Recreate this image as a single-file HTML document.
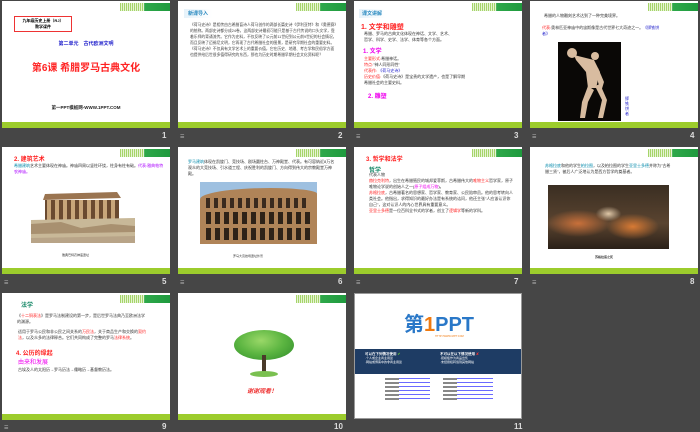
<!DOCTYPE html>
<html><head><meta charset="utf-8"><style>
*{margin:0;padding:0;box-sizing:border-box}
body{width:700px;height:432px;background:#464646;position:relative;overflow:hidden;font-family:"Liberation Sans","Noto Sans CJK SC",sans-serif}
.s{position:absolute;width:168px;height:127px;background:#fff;overflow:hidden}
.s .bar{position:absolute;left:0;right:0;bottom:0;height:6px;background:#9ccc2c}
.s .dec{position:absolute;top:2px;left:118px;width:50px;height:8px;background:linear-gradient(90deg,#c8e6a0 0,#c8e6a0 45%,#2ea84a 50%,#1f9a3e 100%)}
.s .dec:before{content:"";position:absolute;left:0;top:0;width:24px;height:8px;background:repeating-linear-gradient(90deg,#a6d46a 0 1px,#e6f4d4 1px 2px)}
.n{position:absolute;color:#ddd;font-size:8px;font-weight:bold}
.ic{position:absolute;color:#bbb;font-size:5px}
.t{position:absolute;font-size:4px;line-height:6px;color:#333}
.h{position:absolute;font-weight:bold;font-size:7px}
</style></head><body>

<!-- 1 -->
<div class="s" style="left:2px;top:1px">
<div class="dec"></div>
<div style="position:absolute;left:12px;top:15px;width:58px;height:16px;border:1px solid #e33;font-size:4px;font-weight:bold;text-align:center;line-height:6px;padding-top:1px">九年级历史上册（RJ）<br>教学课件</div>
<div style="position:absolute;left:0;width:168px;top:39px;text-align:center;color:#22c;font-size:5px;font-weight:bold">第二单元　古代欧洲文明</div>
<div style="position:absolute;left:0;width:168px;top:58px;text-align:center;color:#f22;font-size:10px;font-weight:bold">第6课 希腊罗马古典文化</div>
<div style="position:absolute;left:0;width:168px;top:104px;text-align:center;color:#222;font-size:4.5px;font-weight:bold">第一PPT模板网-WWW.1PPT.COM</div>
<div class="bar"></div></div>
<div class="n" style="left:162px;top:131px">1</div>

<!-- 2 -->
<div class="s" style="left:178px;top:1px">
<div class="dec"></div>
<div class="h" style="left:6px;top:8px;color:#2a8ac0;font-size:5px;background:linear-gradient(90deg,#e6f2fa,#fff);padding:1px 4px">新课导入</div>
<div class="t" style="left:12px;top:22px;width:148px;font-size:3.8px;line-height:5.9px;color:#444">《荷马史诗》是相传由古希腊盲诗人荷马创作的两部长篇史诗《伊利亚特》和《奥德赛》的统称。两部史诗都分成24卷，这两部史诗最初可能只是基于古代传说的口头文学，靠着乐师的背诵流传。它作为史料，不仅反映了公元前11世纪到公元前9世纪的社会情况，而且反映了迈锡尼文明，它再现了古代希腊社会的图景，是研究早期社会的重要史料。《荷马史诗》不仅具有文学艺术上的重要价值，它在历史、地理、考古学和民俗学方面也提供给后世很多值得研究的东西，那也为历史时期希腊早期社会文化资料呢？</div>
<div class="bar"></div></div>
<div class="ic" style="left:180px;top:134px">☰</div>
<div class="n" style="left:338px;top:131px">2</div>

<!-- 3 -->
<div class="s" style="left:354px;top:1px">
<div class="dec"></div>
<div class="h" style="left:5px;top:8px;color:#2a8ac0;font-size:5px;background:linear-gradient(90deg,#e6f2fa,#fff);padding:1px 3px">课文讲解</div>
<div class="h" style="left:7px;top:21px;color:#f22">1. 文学和雕塑</div>
<div class="t" style="left:10px;top:30px;width:150px">希腊、罗马的古典文化体现在神话、文学、艺术、<br>哲学、科学、史学、法学、体育等各个方面。</div>
<div class="h" style="left:9px;top:45px;color:#e0e;font-size:6px">1. 文学</div>
<div class="t" style="left:10px;top:55px;width:150px"><span style="color:#f22">主要形式:</span>希腊神话。<br><span style="color:#f22">特点:</span>"神人同形同性"<br><span style="color:#f22">代表作:</span> <span style="color:#22c">《荷马史诗》</span><br><span style="color:#f22">历史价值:</span>《荷马史诗》是宝贵的文学遗产，也是了解早期<br>希腊社会的主要史料。</div>
<div class="h" style="left:14px;top:90px;color:#e0e;font-size:6px">2. 雕塑</div>
<div class="bar"></div></div>
<div class="ic" style="left:356px;top:134px">☰</div>
<div class="n" style="left:514px;top:131px">3</div>

<!-- 4 -->
<div class="s" style="left:530px;top:1px">
<div class="dec"></div>
<div class="t" style="left:14px;top:12px;width:150px">希腊的人物雕刻艺术达到了一种完美境界。</div>
<div class="t" style="left:12px;top:24px;width:120px"><span style="color:#f22">代表:</span>奥林匹亚神庙中的宙斯像是古代世界七大奇迹之一。<span style="color:#22c">《掷铁饼者》</span></div>
<div style="position:absolute;left:28px;top:41px;width:63px;height:79px;background:#0a0806">
<svg width="63" height="79" viewBox="0 0 63 79" style="position:absolute;left:0;top:0">
<g fill="#d8bca0">
<circle cx="14" cy="11" r="5"/>
<ellipse cx="37" cy="14" rx="4" ry="4"/>
<path d="M16 13 L36 18 L42 30 L38 46 L30 46 L28 30 L18 18Z"/>
<path d="M30 44 L24 60 L22 76 L27 76 L30 60 L36 48Z"/>
<path d="M37 44 L44 58 L40 76 L45 76 L49 58 L42 42Z"/>
<path d="M40 26 L46 40 L43 50 L40 40Z"/>
</g></svg></div>
<div class="t" style="left:95px;top:95px;color:#22c;width:5px;line-height:5px">掷铁饼者</div>
<div class="bar"></div></div>
<div class="ic" style="left:532px;top:134px">☰</div>
<div class="n" style="left:690px;top:131px">4</div>

<!-- 5 -->
<div class="s" style="left:2px;top:147px">
<div class="dec"></div>
<div class="h" style="left:12px;top:7px;color:#f22;font-size:6px">2. 建筑艺术</div>
<div class="t" style="left:12px;top:16px;width:150px"><span style="color:#08a">希腊建筑</span>艺术主要体现在神庙。神庙四周以竖柱环绕，柱身有柱有础。<span style="color:#a0f">代表:雅典帕特农神庙。</span></div>
<svg style="position:absolute;left:29px;top:33px" width="104" height="63" viewBox="0 0 104 63">
<path d="M14 14 L86 12 L90 18 L12 20Z" fill="#9a7450"/>
<rect x="14" y="20" width="74" height="22" fill="#6a4a30"/>
<g fill="#c8a67a"><rect x="16" y="20" width="4" height="22"/><rect x="24" y="20" width="4" height="22"/><rect x="32" y="20" width="4" height="22"/><rect x="40" y="20" width="4" height="22"/><rect x="48" y="20" width="4" height="22"/><rect x="56" y="20" width="4" height="22"/><rect x="64" y="20" width="4" height="22"/><rect x="72" y="20" width="4" height="22"/><rect x="80" y="20" width="4" height="22"/></g>
<path d="M0 40 L104 38 L104 63 L0 63Z" fill="#c8b898"/>
<path d="M0 44 L30 42 L50 48 L80 44 L104 46 L104 52 L0 54Z" fill="#a89070"/>
<path d="M0 58 L104 56 L104 63 L0 63Z" fill="#b8a488"/>
</svg>
<div class="t" style="left:60px;top:105px;font-size:3px">雅典巴特农神庙遗址</div>
<div class="bar"></div></div>
<div class="ic" style="left:4px;top:280px">☰</div>
<div class="n" style="left:162px;top:277px">5</div>

<!-- 6 -->
<div class="s" style="left:178px;top:147px">
<div class="dec"></div>
<div class="t" style="left:10px;top:12px;width:150px"><span style="color:#08a">罗马建筑</span>体现在凯旋门、竞技场、剧场圆柱台、万神殿堂、代表。有可容纳近8万名观众的大竞技场、引水道工程、庆祝胜利的凯旋门、方向得到伟大的宗教殿堂万神殿。</div>
<div style="position:absolute;left:22px;top:35px;width:117px;height:62px;background:#9ec0e0;overflow:hidden">
<div style="position:absolute;left:0;top:6px;width:117px;height:56px;border-radius:60% 40% 0 0/20% 10% 0 0;background:#b08458"></div>
<div style="position:absolute;left:2px;top:16px;width:105px;height:10px;background:repeating-linear-gradient(90deg,#b08458 0 4px,#3a2a1e 4px 8px)"></div>
<div style="position:absolute;left:2px;top:30px;width:110px;height:12px;background:repeating-linear-gradient(90deg,#b08458 0 4px,#2e2218 4px 9px)"></div>
<div style="position:absolute;left:2px;top:46px;width:112px;height:12px;background:repeating-linear-gradient(90deg,#b08458 0 4px,#2e2218 4px 9px)"></div>
</div>
<div class="t" style="left:55px;top:106px;font-size:3px">罗马大竞技场遗址外景</div>
<div class="bar"></div></div>
<div class="ic" style="left:180px;top:280px">☰</div>
<div class="n" style="left:338px;top:277px">6</div>

<!-- 7 -->
<div class="s" style="left:354px;top:147px">
<div class="dec"></div>
<div class="h" style="left:12px;top:7px;color:#f22;font-size:6px">3. 哲学和法学</div>
<div class="h" style="left:15px;top:18px;color:#1a8a6a;font-size:6px">哲学</div>
<div class="t" style="left:15px;top:25px;width:145px">代表人物<br><span style="color:#f22">赫拉克利特</span>，出生在希腊殖民的城邦爱菲斯，古希腊伟大的<span style="color:#f22">唯物主义</span>哲学家，原子唯物论学说的创始人之一(<span style="color:#e0e">原子组成万物</span>)。<br><span style="color:#f22">苏格拉底</span>，古希腊著名的思想家、哲学家、教育家、公民陪审员。他的思考转向人类社会。他指出，求得知识的最好办法是有系统的诘问，他还主张"人应该认识你自己"，这对认识人的内心世界具有重要意义。<br><span style="color:#f22">亚里士多德</span>是一位百科全书式的学者，创立了<span style="color:#f22">逻辑学</span>等新的学科。</div>
<div class="bar"></div></div>
<div class="ic" style="left:356px;top:280px">☰</div>
<div class="n" style="left:514px;top:277px">7</div>

<!-- 8 -->
<div class="s" style="left:530px;top:147px">
<div class="dec"></div>
<div class="t" style="left:15px;top:16px;width:128px"><span style="color:#08a">苏格拉底</span>和他的学生<span style="color:#08a">柏拉图</span>，以及柏拉图的学生<span style="color:#08a">亚里士多德</span>并称为"古希腊三贤"，被后人广泛地认为是西方哲学的奠基者。</div>
<div style="position:absolute;left:18px;top:38px;width:121px;height:64px;background:radial-gradient(ellipse at 25% 60%,#c8703a 0,transparent 25%),radial-gradient(ellipse at 70% 65%,#d87a34 0,transparent 22%),radial-gradient(ellipse at 50% 45%,#e0c8a8 0,transparent 15%),linear-gradient(180deg,#3a2e22,#5a4430 60%,#2a2018)"></div>
<div class="t" style="left:65px;top:107px;font-size:3px;font-weight:bold">苏格拉底之死</div>
<div class="bar"></div></div>
<div class="ic" style="left:532px;top:280px">☰</div>
<div class="n" style="left:690px;top:277px">8</div>

<!-- 9 -->
<div class="s" style="left:2px;top:293px">
<div class="dec"></div>
<div class="h" style="left:19px;top:7px;color:#1a8a6a;font-size:6px">法学</div>
<div class="t" style="left:15px;top:20px;width:130px">《<span style="color:#f22">十二铜表法</span>》是罗马法制建设的第一步，是后世罗马法典乃至欧洲法学的渊源。</div>
<div class="t" style="left:16px;top:36px;width:130px">适用于罗马公民和非公民之间关系的<span style="color:#f22">万民法</span>，关于商品生产和交换的<span style="color:#f22">契约法</span>，以及众多的法律释合。它们共同构成了完整的罗马<span style="color:#f22">法律系统</span>。</div>
<div class="h" style="left:14px;top:55px;color:#f22;font-size:6px">4. 公历的缘起</div>
<div class="h" style="left:16px;top:64px;color:#e0e;font-size:6px;font-weight:normal">由来和发展</div>
<div class="t" style="left:16px;top:74px;width:140px">古埃及人的太阳历→罗马历法→儒略历→基督教历法。</div>
<div class="bar"></div></div>
<div class="ic" style="left:4px;top:425px">☰</div>
<div class="n" style="left:162px;top:422px">9</div>

<!-- 10 -->
<div class="s" style="left:178px;top:293px">
<div class="dec"></div>
<div style="position:absolute;left:58px;top:35px;width:24px;height:5px;border-radius:50%;background:#fff"></div>
<div style="position:absolute;left:56px;top:37px;width:60px;height:30px;border-radius:50%;background:radial-gradient(ellipse at 45% 35%,#9ad868 0,#5ab440 50%,#2e8a2a 100%)"></div>
<div style="position:absolute;left:84px;top:62px;width:4px;height:18px;background:#4a3a2a"></div>
<div style="position:absolute;left:72px;top:78px;width:28px;height:6px;border-radius:50%;background:#7ac050"></div>
<div style="position:absolute;left:0;width:168px;top:93px;text-align:center;color:#e33;font-size:6px;font-style:italic;font-weight:bold">谢谢观看！</div>
<div class="bar"></div></div>
<div class="n" style="left:334px;top:422px">10</div>

<!-- 11 -->
<div class="s" style="left:354px;top:293px;height:126px;border:1px solid #999">
<div style="position:absolute;left:0;width:168px;top:20px;text-align:center;font-size:20px;font-weight:bold;color:#2a78c8;line-height:22px">第<span style="color:#f07a10">1</span>PPT</div>
<div style="position:absolute;left:80px;top:41px;font-size:2.5px;color:#f07a10">HTTP://WWW.1PPT.COM</div>
<div style="position:absolute;left:0;right:0;top:55px;height:25px;background:#1e3c64;color:#fff;font-size:3px;line-height:4px">
<div style="position:absolute;left:10px;top:3px"><b style="font-size:3.5px">可以在下列情况使用 <span style="color:#6c3">✔</span></b><br>·个人或企业商业用途<br>·网站或博客中的非商业用途</div>
<div style="position:absolute;left:85px;top:3px"><b style="font-size:3.5px">不可以在以下情况使用 <span style="color:#e33">✘</span></b><br>·把模板作为商品出售<br>·未经授权转载到其他网站</div></div>
<div style="position:absolute;left:30px;top:84px;width:45px;height:22px;background:repeating-linear-gradient(180deg,#2a2aff 0 1px,#fff 1px 4px);opacity:.7"></div>
<div style="position:absolute;left:88px;top:84px;width:50px;height:22px;background:repeating-linear-gradient(180deg,#2a2aff 0 1px,#fff 1px 4px);opacity:.7"></div>
<div style="position:absolute;left:30px;top:84px;width:14px;height:22px;background:repeating-linear-gradient(180deg,#888 0 2px,#fff 2px 4px)"></div>
<div style="position:absolute;left:88px;top:84px;width:14px;height:22px;background:repeating-linear-gradient(180deg,#888 0 2px,#fff 2px 4px)"></div>
</div>
<div class="n" style="left:514px;top:422px">11</div>

</body></html>
